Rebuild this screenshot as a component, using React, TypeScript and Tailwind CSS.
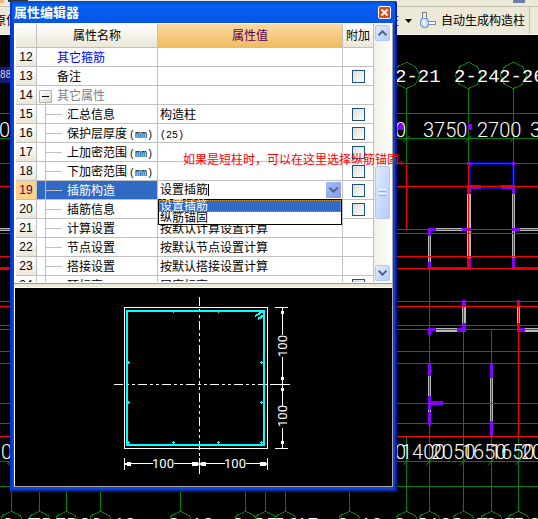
import clsx from "clsx";
import { useState } from "react";

type Row = {
  no: number;
  name: string;
  unit?: string;
  value?: string;
  valueUnit?: string;
  kind?: "link" | "plain" | "group";
  extra?: boolean;
};

const ROWS: Row[] = [
  { no: 12, name: "其它箍筋", kind: "link" },
  { no: 13, name: "备注", kind: "plain", extra: true },
  { no: 14, name: "其它属性", kind: "group" },
  { no: 15, name: "汇总信息", value: "构造柱", extra: true },
  { no: 16, name: "保护层厚度", unit: "(mm)", valueUnit: "(25)", extra: true },
  { no: 17, name: "上加密范围", unit: "(mm)", extra: true },
  { no: 18, name: "下加密范围", unit: "(mm)", extra: true },
  { no: 19, name: "插筋构造", extra: true },
  { no: 20, name: "插筋信息", extra: true },
  { no: 21, name: "计算设置", value: "按默认计算设置计算" },
  { no: 22, name: "节点设置", value: "按默认节点设置计算" },
  { no: 23, name: "搭接设置", value: "按默认搭接设置计算" },
  { no: 24, name: "顶标高", unit: "(m)", value: "层底标高", valueUnit: "(+0.00)", extra: true },
];

const SELECTED = 19;
const OPTIONS = ["设置插筋", "纵筋锚固"];

const BOTTOM_AXES = [11, 39, 66, 100, 180, 245, 265, 285, 349, 406, 429, 463, 491, 518];
const BOTTOM_LABELS = [
  { x: 2, t: "2-2" },
  { x: 30, t: "7D" },
  { x: 55, t: "7B" },
  { x: 79, t: "22-18" },
  { x: 168, t: "2-12" },
  { x: 232, t: "2-15" },
  { x: 253, t: "2-16" },
  { x: 273, t: "2-17" },
  { x: 337, t: "2-18" },
  { x: 394, t: "2-21" },
  { x: 417, t: "2-22" },
  { x: 451, t: "2-23" },
  { x: 479, t: "2-25" },
  { x: 506, t: "2-27" },
];
const RED_ROWS = [163, 186, 229, 233, 256, 268, 301, 306, 325, 329, 351, 363, 403, 423, 436];
const RED_COLS = [
  [406, 163, 229],
  [468, 163, 268],
  [513, 163, 268],
  [429, 229, 436],
  [463, 301, 436],
  [491, 329, 436],
  [518, 301, 436],
];
// x, y, width, height
const WALLS = [
  [436, 228, 26, 3],
  [428, 236, 3, 26],
  [467, 193, 4, 65],
  [512, 193, 3, 66],
  [520, 228, 400, 3],
  [462, 306, 4, 18],
  [436, 328, 22, 4],
  [517, 306, 3, 18],
  [525, 328, 400, 4],
  [428, 376, 3, 36],
  [490, 378, 3, 43],
  [0, 228, 12, 3],
];
const BEAMS = [
  [468, 162, 46, 3],
  [468, 163, 3, 24],
  [512, 163, 3, 24],
  [468, 185, 46, 4],
];
const COLUMNS = [
  [467, 162, 4, 3],
  [512, 162, 3, 3],
  [467, 185, 14, 4],
  [501, 185, 14, 4],
  [467, 187, 4, 7],
  [512, 187, 3, 7],
  [428, 228, 8, 3],
  [428, 228, 3, 8],
  [462, 228, 9, 3],
  [512, 228, 8, 3],
  [428, 262, 3, 7],
  [428, 267, 11, 3],
  [457, 267, 14, 3],
  [467, 258, 4, 11],
  [512, 258, 3, 11],
  [512, 267, 12, 3],
  [462, 300, 4, 6],
  [517, 300, 3, 6],
  [462, 323, 4, 9],
  [428, 328, 8, 3],
  [428, 328, 3, 7],
  [457, 328, 9, 4],
  [517, 323, 3, 9],
  [517, 328, 8, 4],
  [428, 363, 3, 13],
  [430, 370, 2, 2],
  [428, 396, 3, 14],
  [428, 412, 3, 13],
  [428, 401, 15, 4],
  [490, 363, 3, 15],
  [490, 421, 3, 15],
  [0, 267, 9, 3],
];

function Rects({ items, fill }: { items: number[][]; fill: string }) {
  return (
    <g fill={fill}>
      {items.map(([x, y, w, h]) => (
        <rect key={`${x}-${y}-${w}-${h}`} x={x} y={y} width={w} height={h} />
      ))}
    </g>
  );
}

function Bubble({ x, y }: { x: number; y: number }) {
  const pts = [
    [0, -13],
    [9, -9],
    [13, 0],
    [9, 9],
    [0, 13],
    [-9, 9],
    [-13, 0],
    [-9, -9],
  ];
  return (
    <polygon
      points={pts.map(([dx, dy]) => `${x + dx + 0.5},${y + dy + 0.5}`).join(" ")}
      fill="none"
    />
  );
}

function PlanDrawing() {
  return (
    <svg
      className="block h-[484px] w-full"
      shapeRendering="crispEdges"
      role="img"
      aria-label="平面图"
    >
      {/* plan coordinates start at the window's top, the toolbar takes 35 */}
      <g transform="translate(0 -35)">
        <Rects items={[[0, 67, 12, 16]]} fill="#191970" />
        <g stroke="#008000" strokeWidth="1">
          <path d="M0 113.5H4000M0 138.5H4000M0 461.5H4000M0 486.5H4000" />
          <path d="M406.5 88V163M468.5 88V163M513.5 88V163" />
          <path d="M403 142l6-6M465 142l6-6M510 142l6-6M7 464l4-4" />
          {[406, 468, 513].map((x) => (
            <Bubble key={x} x={x} y={75} />
          ))}
          {BOTTOM_AXES.map((x) => (
            <g key={x}>
              <path d={`M${x + 0.5} 436V511M${x - 3} 465l6-6`} />
              <Bubble x={x} y={524} />
            </g>
          ))}
        </g>
        <Rects items={WALLS} fill="#b8b8b8" />
        <Rects items={BEAMS} fill="#0000a0" />
        <Rects items={[[439, 267, 18, 3], [524, 267, 400, 3]]} fill="#006400" />
        <Rects items={COLUMNS} fill="#7f00ff" />
        <g fill="#7f00ff">
          <rect x="398" y="124" width="5" height="6" />
          <rect x="468" y="124" width="4" height="6" />
        </g>
        <g stroke="#ff0000" strokeWidth="1">
          {RED_ROWS.map((y) => (
            <path key={y} d={`M0 ${y + 0.5}H4000`} />
          ))}
          {RED_COLS.map(([x, y1, y2]) => (
            <path key={x} d={`M${x + 0.5} ${y1}V${y2}`} />
          ))}
        </g>
        <g fill="#ffffff" className="font-['Liberation_Mono',monospace] text-[19px]">
          <text x="395" y="82">2-21</text>
          <text x="454" y="82">2-24</text>
          <text x="499" y="82">2-26</text>
          {BOTTOM_LABELS.map(({ x, t }) => (
            <text key={x} x={x} y="530">{t}</text>
          ))}
        </g>
        <g fill="#ffffff" className="font-[Roboto,sans-serif] text-[20px] font-light">
          <text x="-12" y="137">50</text>
          <text x="395" y="137">0</text>
          <text x="423" y="137">3750</text>
          <text x="477" y="137">2700</text>
          <text x="530" y="137">3900</text>
          <text x="1" y="459">0</text>
          <text x="395" y="459">0</text>
          <text x="401" y="459">1400</text>
          <text x="431" y="459">2050</text>
          <text x="462" y="459">1650</text>
          <text x="490" y="459">1650</text>
          <text x="521" y="459">2050</text>
        </g>
        <text x="0" y="78" fill="#c8c8e8" className="font-[Roboto,sans-serif] text-[10px]">
          88
        </text>
      </g>
    </svg>
  );
}

function SectionDrawing() {
  return (
    <svg
      viewBox="15 288 377 198"
      className="block w-full bg-black"
      shapeRendering="crispEdges"
      role="img"
      aria-label="构造柱截面"
    >
      <g fill="none" stroke="#ffffff" strokeWidth="1">
        <rect x="124.5" y="307.5" width="143" height="141" />
        <path d="M199.5 297V474" strokeDasharray="9 3 3 3 3 3" />
        <path d="M113.5 384.5H290" strokeDasharray="9 3 3 3 3 3" />
        <path d="M275 307.5H288M275 448.5H288M272 384.5H290" />
        <path d="M282.5 307V335M282.5 357V406M282.5 428V448" />
        <path d="M124.5 458V470M199.5 458V470M267.5 458V470" />
        <path d="M124 463.5H153M174 463.5H225M246 463.5H267" />
      </g>
      <g fill="#ffffff">
        <path d="M281 314h3v-3h-1v-3h-1v3h-1zM281 377h3v3h-1v4h-1v-4h-1zM281 391h3v-3h-1v-3h-1v3h-1zM281 441h3v3h-1v4h-1v-4h-1z" />
        <path d="M125 463l3-1h3v4h-3l-3-1zM199 463l-3-1h-4v4h4l3-1zM199 463l3-1h4v4h-4l-3-1zM267 463l-3-1h-4v4h4l3-1z" />
      </g>
      <rect x="127" y="311" width="137" height="134" fill="none" stroke="#00ffff" strokeWidth="2" />
      <path
        d="M255 316l4-2 4-3M258 319l3-2 4-3"
        fill="none"
        stroke="#00ffff"
        strokeWidth="2"
      />
      <g fill="#00ffff">
        {[
          [173, 311],
          [218, 311],
          [128, 362],
          [128, 402],
          [261, 362],
          [261, 402],
          [173, 442],
          [218, 442],
          [128, 442],
          [261, 442],
        ].map(([x, y]) => (
          <path key={`${x}-${y}`} d={`M${x} ${y - 1}h1v1h1v1h-1v1h-1v-1h-1v-1h1z`} />
        ))}
      </g>
      <g fill="#ffffff" textAnchor="middle" className="font-[Roboto,sans-serif] text-[13px]">
        <text x="163" y="468">100</text>
        <text x="235" y="468">100</text>
        <text transform="translate(287 346) rotate(-90)">100</text>
        <text transform="translate(287 416) rotate(-90)">100</text>
      </g>
    </svg>
  );
}

function ColumnIcon() {
  return (
    <svg width="17" height="17" viewBox="0 0 17 17" shapeRendering="crispEdges" aria-hidden="true">
      <rect x="2.5" y="0.5" width="4" height="7" fill="#ece9d8" stroke="#808080" />
      <rect x="6.5" y="9.5" width="9" height="3" fill="#fff" stroke="#7d8fa8" />
      <path d="M1.500 6.500h6v2h1v5h-1v2h-5v-2h-2v-5h1z" fill="#c3ddfb" stroke="#7c9fd6" />
      <rect x="3" y="8" width="2" height="5" fill="#fff" />
    </svg>
  );
}

function Toolbar() {
  return (
    <header className="bg-[#ece9d8] text-xs text-black">
      <div className="flex h-[7px] overflow-hidden border-b border-[#c5c2b2]">
        <span className="h-[3px] w-1 bg-[#f5b56c]" />
        <span className="ml-1 h-[2px] w-5 bg-[#333333]" />
        <span className="mr-[13px] ml-auto h-[3px] w-3 bg-[#6c80a8]" />
      </div>
      <div className="flex h-7 items-center border-b border-[#f8f7f0]">
        <button className="mr-auto -ml-[6px] whitespace-nowrap">原位标注</button>
        <div className="flex h-full items-center border-r border-[#c5c2b2] pr-1">
          <button className="flex items-center gap-[6px]">
            柱
            <svg width="7" height="4" viewBox="0 0 7 4" aria-hidden="true">
              <path d="M0 0h7L3.500 4z" />
            </svg>
          </button>
          <button className="ml-2 flex items-center gap-1 whitespace-nowrap">
            <ColumnIcon />
            自动生成构造柱
          </button>
        </div>
        <span className="w-2" />
      </div>
    </header>
  );
}

function Chevron({ up }: { up?: boolean }) {
  return (
    <svg width="9" height="6" viewBox="0 0 9 6" fill="none" stroke="#4d6185" strokeWidth="2" aria-hidden="true">
      <path d={up ? "M0.500 5.300l4-4 4 4" : "M0.500 0.700l4 4 4-4"} />
    </svg>
  );
}

function ScrollBar() {
  const button =
    "flex w-[15px] items-center justify-center rounded-xs border border-[#b4c8f6] bg-linear-to-br from-[#e1eafe] to-[#b5cbf8]";
  return (
    <div className="flex w-[17px] shrink-0 flex-col items-center bg-linear-to-r from-[#f0efe7] to-[#fefefb] pt-px">
      <button aria-label="向上" className={clsx(button, "h-4")}>
        <Chevron up />
      </button>
      <div className="flex-1" />
      <div className={clsx(button, "h-[53px] flex-col gap-px")}>
        <span className="h-px w-[7px] bg-white" />
        <span className="h-px w-[7px] bg-[#8cb0f8]" />
        <span className="h-px w-[7px] bg-white" />
        <span className="h-px w-[7px] bg-[#8cb0f8]" />
      </div>
      <div className="h-[46px]" />
      <button aria-label="向下" className={clsx(button, "mb-px h-4")}>
        <Chevron />
      </button>
    </div>
  );
}

function Unit({ text }: { text: string }) {
  return <span className="font-['Liberation_Mono',monospace] text-[10px]">{text}</span>;
}

function NameCell({ row }: { row: Row }) {
  if (row.kind === "group") {
    return (
      <div className="flex h-[18px] text-[#808080]">
        <div className="ml-[2px] flex w-[13px] flex-col items-center pt-1">
          <button
            aria-label="折叠"
            className="flex h-[13px] w-[13px] items-center justify-center border border-[#b5b5b5] bg-linear-to-br from-white to-[#dedbd0]"
          >
            <span className="h-px w-[7px] bg-black" />
          </button>
          <span className="w-px flex-1 bg-[#c0c0c0]" />
        </div>
        <span className="ml-[5px] leading-5">{row.name}</span>
      </div>
    );
  }
  if (row.kind) {
    return (
      <div className={clsx("h-[18px] pl-5 leading-5", row.kind === "link" && "text-[#0000ff]")}>
        {row.name}
      </div>
    );
  }
  return (
    <div className="flex h-[18px] whitespace-nowrap leading-5">
      <span className="ml-2 w-px self-stretch bg-[#c0c0c0]" />
      <span className="mr-[5px] h-px w-4 self-center bg-[#c0c0c0]" />
      {row.name}
      {row.unit && (
        <span className="ml-[2px]">
          <Unit text={row.unit} />
        </span>
      )}
    </div>
  );
}

function AnchorPicker() {
  const [value, setValue] = useState(OPTIONS[0]);
  return (
    <div className="relative">
      <div className="flex h-[18px] items-center pl-[2px]">
        <input
          role="combobox"
          aria-label="插筋构造"
          aria-expanded="true"
          aria-controls="anchor-options"
          value={value}
          onChange={(e) => setValue(e.target.value)}
          className="h-4 w-12 p-0 text-xs leading-4 outline-none"
        />
        <span className="h-3 w-px bg-black" />
        <button
          aria-label="展开"
          className="mr-px ml-auto flex h-4 w-[15px] items-center justify-center bg-linear-to-br from-[#a9bdf5] to-[#8298e6]"
        >
          <Chevron />
        </button>
      </div>
      <ul
        id="anchor-options"
        role="listbox"
        className="absolute inset-x-0 top-full z-10 border border-black bg-white leading-3"
      >
        {OPTIONS.map((option, i) => (
          <li
            key={option}
            role="option"
            aria-selected={option === value}
            onClick={() => setValue(option)}
            className={clsx(
              "h-3 pl-px",
              i === 0 && "bg-[#316ac5] text-white outline-1 -outline-offset-1 outline-dotted outline-[#ce953a]"
            )}
          >
            {option}
          </li>
        ))}
      </ul>
    </div>
  );
}

function PropertyTable() {
  const head =
    "h-6 border-r border-b border-[#c0c0c0] bg-linear-to-b from-white to-[#ebe8d8] p-0 font-normal";
  const cell = "h-[19px] border-r border-b border-[#c0c0c0] p-0";
  return (
    <table className="w-full table-fixed border-separate border-spacing-0">
      <colgroup>
        <col className="w-[21px]" />
        <col className="w-[121px]" />
        <col />
        <col className="w-[31px]" />
      </colgroup>
      <thead>
        <tr>
          <th className={head} aria-label="序号" />
          <th className={head}>属性名称</th>
          <th className="h-6 border-r border-b border-[#c0c0c0] bg-linear-to-b from-[#fbd9a0] to-[#f0bc60] p-0 font-normal text-[#550055]">
            属性值
          </th>
          <th className={head}>附加</th>
        </tr>
      </thead>
      <tbody>
        {ROWS.map((row) => {
          const selected = row.no === SELECTED;
          return (
            <tr key={row.no}>
              <td
                className={clsx(
                  cell,
                  "text-center font-['Liberation_Sans',sans-serif] leading-[18px]",
                  selected
                    ? "bg-[#ffd28a] text-[#550055]"
                    : "bg-linear-to-b from-white to-[#ebe8d8]"
                )}
              >
                {row.no}
              </td>
              <td className={clsx(cell, selected && "bg-[#316ac5] text-white")}>
                <NameCell row={row} />
              </td>
              <td className={cell}>
                {selected ? (
                  <AnchorPicker />
                ) : (
                  <div className="h-[18px] whitespace-nowrap pl-[2px] leading-5">
                    {row.value}
                    {row.valueUnit && <Unit text={row.valueUnit} />}
                  </div>
                )}
              </td>
              <td className={cell}>
                {row.extra && (
                  <input
                    type="checkbox"
                    aria-label={`附加 ${row.name}`}
                    className="mx-auto block h-[13px] w-[13px] appearance-none border border-[#1c5180] bg-linear-to-br from-[#dcdcd7] to-white"
                  />
                )}
              </td>
            </tr>
          );
        })}
      </tbody>
    </table>
  );
}

function PropertyEditor() {
  return (
    <section
      aria-label="属性编辑器"
      className="absolute top-px left-[10px] w-[387px] rounded-t-xs border-2 border-t-0 border-[#001a9c] border-l-[#0831d9] bg-[#0843dc]"
    >
      <div className="flex h-[22px] items-center justify-between bg-linear-to-b from-[#0048d0] via-[#0560f0] via-20% to-[#0455e4] pt-px pr-1 pl-[2px]">
        <h1 className="text-[13px] font-bold text-white">属性编辑器</h1>
        <button
          aria-label="关闭"
          className="flex h-[13px] w-[13px] items-center justify-center rounded-xs border border-white bg-[#dd4a22]"
        >
          <svg width="7" height="7" viewBox="0 0 7 7" stroke="#fff" strokeWidth="2" aria-hidden="true">
            <path d="M0.500 0.500l6 6M6.500 0.500l-6 6" />
          </svg>
        </button>
      </div>
      <div className="mx-[2px] mb-[3px] border-t border-r border-b border-t-white border-r-[#aca899] border-b-[#aca899] bg-[#ece9d8]">
        <div className="flex h-[259px] overflow-hidden border-r border-b border-l-2 border-white bg-white">
          <div className="min-w-0 flex-1 overflow-hidden">
            <PropertyTable />
          </div>
          <ScrollBar />
        </div>
        <div className="h-px bg-[#7f9db9]" />
        <div className="h-[3px]" />
        <div className="border-t border-l border-white">
          <SectionDrawing />
        </div>
      </div>
    </section>
  );
}

export default function App() {
  return (
    <main className="relative h-screen overflow-hidden bg-black font-['Liberation_Sans','Noto_Sans_CJK_SC',sans-serif] text-xs text-black">
      <Toolbar />
      <PlanDrawing />
      <PropertyEditor />
      <p className="absolute top-[152px] left-[183px] whitespace-nowrap text-xs text-[#ff0000]">
        如果是短柱时，可以在这里选择纵筋锚固。
      </p>
    </main>
  );
}
